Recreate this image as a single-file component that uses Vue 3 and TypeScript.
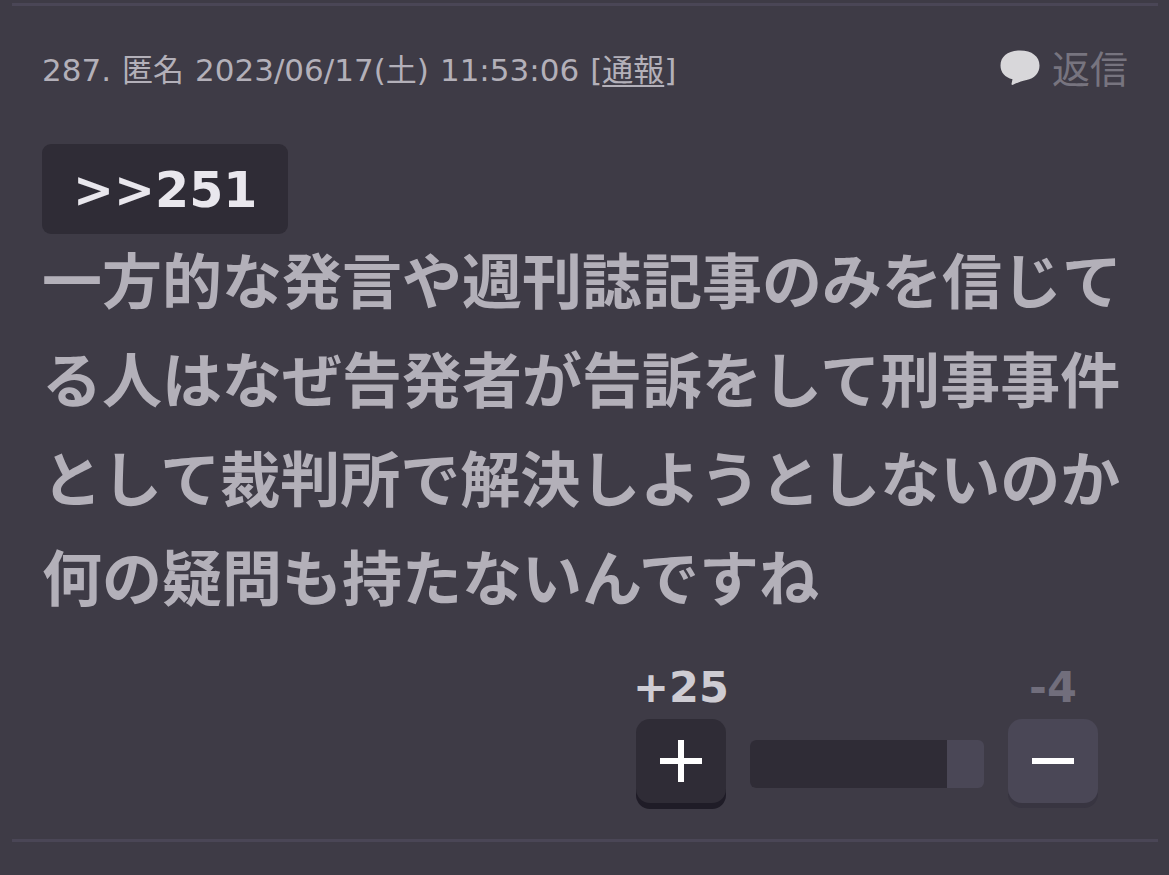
<script setup lang="ts">
import { computed, ref } from 'vue'

const plus = ref(25)
const minus = ref(4)
const voted = ref(false)
const plusRatio = ref(84)

const fillWidth = computed(() => `${plusRatio.value}%`)

function vote(kind: 'plus' | 'minus') {
  if (voted.value) return
  voted.value = true
  if (kind === 'plus') plus.value++
  else minus.value++
}
</script>

<template>
  <main class="thread">
    <article class="comment">
      <header class="head">
        <p class="meta">
          <span>287.</span>
          <span>匿名</span>
          <time datetime="2023-06-17T11:53:06">
            <span>2023/06/17(土)</span>
            <span>11:53:06</span>
          </time>
          <span>[<a href="#report">通報</a>]</span>
        </p>
        <a class="reply" href="#reply">
          <svg class="bubble" viewBox="0 0 40 36" aria-hidden="true">
            <path
              d="M20 .5C32 .5 39.500 6.500 39.500 15.500C39.500 23 34.500 28.500 26.500 30C21 31 17 33 13 34.800C11.800 35.200 11.300 34.500 11.600 33.500L12.500 29.300C5 27.500 .5 22.500 .5 15.500C.5 6.500 8 .5 20 .5Z"
            />
          </svg>
          <span>返信</span>
        </a>
      </header>

      <a class="anchor" href="#comment251">&gt;&gt;251</a>
      <p class="body">一方的な発言や週刊誌記事のみを信じてる人はなぜ告発者が告訴をして刑事事件として裁判所で解決しようとしないのか何の疑問も持たないんですね</p>

      <footer class="votes">
        <div class="vote">
          <output class="count">+{{ plus }}</output>
          <button class="btn btn-plus" type="button" aria-label="プラス" @click="vote('plus')">
            <svg viewBox="0 0 42 42" aria-hidden="true"><path d="M18 0h6v18h18v6H24v18h-6V24H0v-6h18z" /></svg>
          </button>
        </div>
        <div class="bar"><div class="bar-fill" :style="{ width: fillWidth }"></div></div>
        <div class="vote">
          <output class="count count-minus">-{{ minus }}</output>
          <button class="btn btn-minus" type="button" aria-label="マイナス" @click="vote('minus')">
            <svg viewBox="0 0 42 42" aria-hidden="true"><path d="M0 18h42v6H0z" /></svg>
          </button>
        </div>
      </footer>
    </article>
  </main>
</template>

<style>
body {
  margin: 0;
  background: #3e3b46;
}
</style>

<style scoped>
.thread {
  box-sizing: border-box;
  min-height: 100vh;
  padding: 3px 11px 0 12px;
  background: #3e3b46;
  color: #b3b0b9;
  font-family: "DejaVu Sans", "Noto Sans CJK JP", sans-serif;
}
.comment {
  padding: 36px 30px 30px;
  border-top: 3px solid #4a4656;
  border-bottom: 3px solid #4a4656;
}
.head {
  display: flex;
  justify-content: space-between;
  align-items: center;
  height: 56px;
}
.meta,
.meta time {
  display: flex;
  gap: 11px;
  margin: 0;
  font-size: 31px;
  line-height: 48px;
  white-space: nowrap;
}
.meta a {
  color: inherit;
  text-decoration: underline;
  text-decoration-thickness: 2px;
  text-underline-offset: 4px;
}
.reply {
  display: flex;
  align-items: center;
  gap: 12px;
  color: #77747f;
  font-size: 38px;
  line-height: 56px;
  text-decoration: none;
}
.bubble {
  width: 40px;
  height: 36px;
  margin-bottom: 4px;
  fill: #d8d7da;
}
.anchor {
  display: block;
  width: fit-content;
  margin-top: 46px;
  padding: 4px 31px 0;
  border-radius: 9px;
  background: #2f2c36;
  color: #e9e7ed;
  font-size: 49px;
  line-height: 86px;
  font-weight: 700;
  text-decoration: none;
}
.body {
  margin: 0;
  font-size: 60px;
  line-height: 99px;
  font-weight: 700;
  overflow-wrap: anywhere;
}
.votes {
  display: flex;
  justify-content: flex-end;
  align-items: flex-end;
  gap: 24px;
  margin-top: 33px;
  padding-right: 30px;
}
.vote {
  display: flex;
  flex-direction: column;
  align-items: center;
  gap: 8px;
  width: 90px;
}
.count {
  color: #ceccd3;
  font-size: 43px;
  line-height: 48px;
  font-weight: 700;
  white-space: nowrap;
}
.count-minus {
  color: #716e7c;
}
.btn {
  display: grid;
  place-items: center;
  width: 90px;
  height: 84px;
  margin: 0 0 6px;
  padding: 0;
  border: 0;
  border-radius: 14px;
  cursor: pointer;
}
.btn svg {
  width: 42px;
  height: 42px;
  fill: #fff;
}
.btn-plus {
  background: #2f2c36;
  box-shadow: 0 6px 0 #1f1c27;
}
.btn-minus {
  background: #4a4756;
  box-shadow: 0 5px 0 #383541;
}
.bar {
  width: 234px;
  height: 48px;
  margin-bottom: 21px;
  border-radius: 6px;
  overflow: hidden;
  background: #4a4756;
}
.bar-fill {
  height: 100%;
  background: #2f2c36;
}
</style>
